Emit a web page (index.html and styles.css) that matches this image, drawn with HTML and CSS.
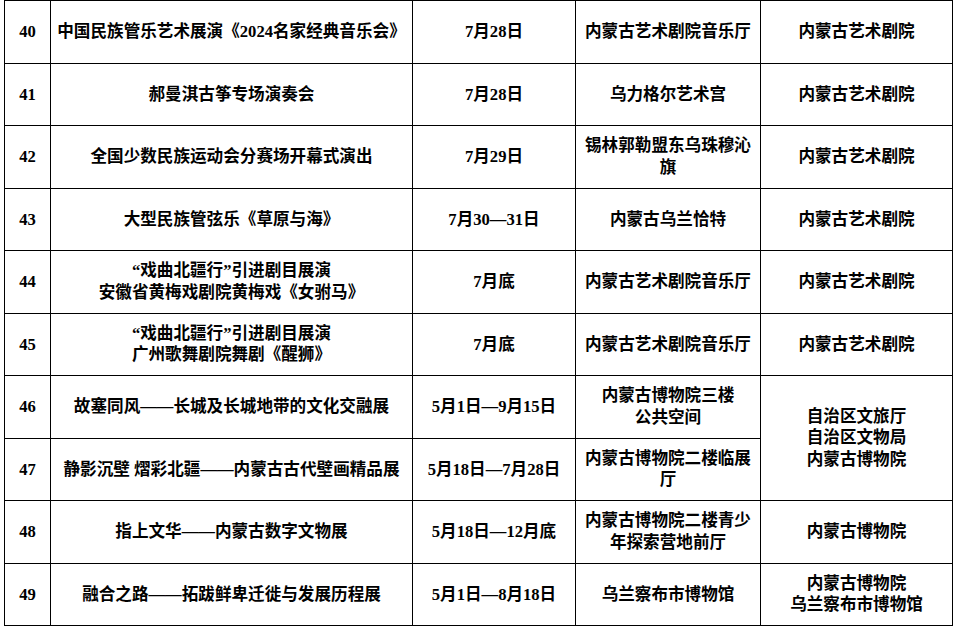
FILE: index.html
```html
<!DOCTYPE html>
<html lang="zh-CN">
<head>
<meta charset="utf-8">
<title>演出展览安排</title>
<link rel="stylesheet" href="styles.css">
</head>
<body>
<table class="schedule">
  <colgroup>
    <col class="c-no">
    <col class="c-title">
    <col class="c-date">
    <col class="c-venue">
    <col class="c-org">
  </colgroup>
  <tbody>
    <tr>
      <td class="no">40</td>
      <td>中国民族管乐艺术展演《2024名家经典音乐会》</td>
      <td>7月28日</td>
      <td>内蒙古艺术剧院音乐厅</td>
      <td>内蒙古艺术剧院</td>
    </tr>
    <tr>
      <td class="no">41</td>
      <td>郝曼淇古筝专场演奏会</td>
      <td>7月28日</td>
      <td>乌力格尔艺术宫</td>
      <td>内蒙古艺术剧院</td>
    </tr>
    <tr>
      <td class="no">42</td>
      <td>全国少数民族运动会分赛场开幕式演出</td>
      <td>7月29日</td>
      <td>锡林郭勒盟东乌珠穆沁旗</td>
      <td>内蒙古艺术剧院</td>
    </tr>
    <tr>
      <td class="no">43</td>
      <td>大型民族管弦乐《草原与海》</td>
      <td>7月30—31日</td>
      <td>内蒙古乌兰恰特</td>
      <td>内蒙古艺术剧院</td>
    </tr>
    <tr>
      <td class="no">44</td>
      <td>“戏曲北疆行”引进剧目展演<br>安徽省黄梅戏剧院黄梅戏《女驸马》</td>
      <td>7月底</td>
      <td>内蒙古艺术剧院音乐厅</td>
      <td>内蒙古艺术剧院</td>
    </tr>
    <tr>
      <td class="no">45</td>
      <td>“戏曲北疆行”引进剧目展演<br>广州歌舞剧院舞剧《醒狮》</td>
      <td>7月底</td>
      <td>内蒙古艺术剧院音乐厅</td>
      <td>内蒙古艺术剧院</td>
    </tr>
    <tr>
      <td class="no">46</td>
      <td>故塞同风——长城及长城地带的文化交融展</td>
      <td>5月1日—9月15日</td>
      <td>内蒙古博物院三楼<br>公共空间</td>
      <td rowspan="2">自治区文旅厅<br>自治区文物局<br>内蒙古博物院</td>
    </tr>
    <tr>
      <td class="no">47</td>
      <td>静影沉壁 熠彩北疆——内蒙古古代壁画精品展</td>
      <td>5月18日—7月28日</td>
      <td>内蒙古博物院二楼临展厅</td>
    </tr>
    <tr>
      <td class="no">48</td>
      <td>指上文华——内蒙古数字文物展</td>
      <td>5月18日—12月底</td>
      <td>内蒙古博物院二楼青少年探索营地前厅</td>
      <td>内蒙古博物院</td>
    </tr>
    <tr>
      <td class="no">49</td>
      <td>融合之路——拓跋鲜卑迁徙与发展历程展</td>
      <td>5月1日—8月18日</td>
      <td>乌兰察布市博物馆</td>
      <td>内蒙古博物院<br>乌兰察布市博物馆</td>
    </tr>
  </tbody>
</table>
</body>
</html>
```

FILE: styles.css
```css
html, body {
  margin: 0;
  padding: 0;
  background: #ffffff;
}

body {
  padding: 0 0 0 4px;
}

.schedule {
  border-collapse: collapse;
  table-layout: fixed;
  width: 948px;
  font-family: "Liberation Serif", "Noto Sans CJK SC", serif;
  font-weight: 700;
  font-size: 16.6px;
  line-height: 21.5px;
  color: #000;
}

.c-no { width: 46px; }
.c-title { width: 362px; }
.c-date { width: 163px; }
.c-venue { width: 185px; }
.c-org { width: 192px; }

.schedule tr {
  height: 62.5px;
}

.schedule td {
  border: 1.6px solid #000;
  text-align: center;
  vertical-align: middle;
  padding: 0 6px;
}

.schedule td.no {
  padding: 0;
}
```
